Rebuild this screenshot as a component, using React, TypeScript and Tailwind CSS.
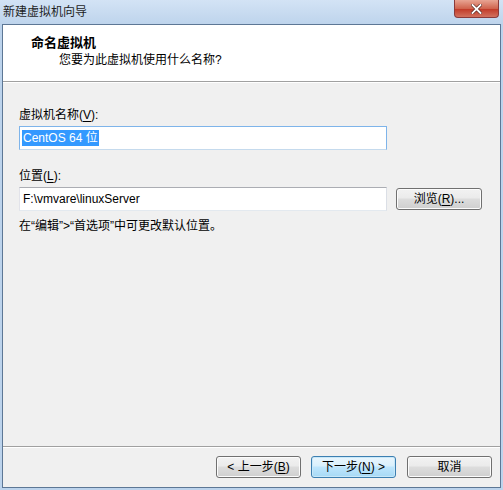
import type { ReactNode } from 'react';

const font = { fontFamily: '"Liberation Sans", "Noto Sans CJK SC", sans-serif' };

function Key({ children }: { children: ReactNode }) {
  return <span className="underline underline-offset-2">{children}</span>;
}

function Button({ children, primary, className }: { children: ReactNode; primary?: boolean; className?: string }) {
  return (
    <button
      className={
        'flex h-[22px] items-center justify-center rounded-[3px] border text-[12px] leading-none text-black ' +
        (primary
          ? 'border-[#3c7fb1] bg-[linear-gradient(#eaf6fd_0%,#d9f0fc_45%,#bee6fd_50%,#a7d9f5_100%)] shadow-[inset_0_0_0_1px_#c8e8f9] '
          : 'border-[#707070] bg-[linear-gradient(#f2f2f2_0%,#ebebeb_45%,#dddddd_50%,#cfcfcf_100%)] shadow-[inset_0_0_0_1px_#fcfcfc] ') +
        (className ?? '')
      }
    >
      {children}
    </button>
  );
}

export default function App() {
  return (
    <div style={font} className="flex h-[490px] w-[503px] flex-col bg-[#bcd3ec] text-[12px] text-black">
      {/* title bar */}
      <div className="relative flex h-[24px] items-center bg-[linear-gradient(#d3e3f5,#bed4ec)] pl-[3px]">
        <span className="text-[12px] leading-none text-[#1e1e1e]">新建虚拟机向导</span>
        <div className="absolute right-[4px] top-0 flex h-[18px] w-[45px] items-center justify-center rounded-b-[4px] border border-t-0 border-[#8a3a3a] bg-[linear-gradient(#e8a493,#d0644e_50%,#c23c2a_55%,#d2715e)]">
          <svg width="11" height="10" viewBox="0 0 11 10">
            <path d="M1.5 1 L9.5 9 M9.5 1 L1.5 9" stroke="#5a2a24" strokeWidth="3.2" strokeLinecap="square" />
            <path d="M1.5 1 L9.5 9 M9.5 1 L1.5 9" stroke="#ffffff" strokeWidth="1.8" strokeLinecap="square" />
          </svg>
        </div>
      </div>

      {/* client area */}
      <div className="mx-[2px] mb-[2px] flex flex-1 flex-col border border-[#5d7795] bg-[#f0f0f0]">
        <div className="flex h-[57px] flex-col border-b border-[#a0a0a0] bg-white pl-[28px] pt-[10px]">
          <div className="text-[13px] font-bold leading-[16px]">命名虚拟机</div>
          <div className="pl-[28px] pt-[1px] text-[12px] leading-[16px]">您要为此虚拟机使用什么名称?</div>
        </div>

        <div className="flex flex-1 flex-col border-t border-white px-[16px] pt-[24px]">
          <div className="leading-[16px]">
            虚拟机名称(<Key>V</Key>):
          </div>
          <div className="mt-[3px] flex h-[24px] w-[368px] items-center border border-[#7eb4ea] border-b-[#c5daed] bg-white px-[2px]">
            <span className="bg-[#3399ff] px-[1px] leading-[16px] text-white">CentOS 64 位</span>
          </div>

          <div className="mt-[18px] leading-[16px]">
            位置(<Key>L</Key>):
          </div>
          <div className="mt-[3px] flex items-center gap-[9px]">
            <div className="flex h-[24px] w-[368px] items-center border border-[#abadb3] border-b-[#e3e9ef] border-l-[#e2e3ea] border-r-[#dbdfe6] bg-white px-[3px] leading-[16px]">
              F:\vmvare\linuxServer
            </div>
            <Button className="w-[86px]">
              浏览(<Key>R</Key>)...
            </Button>
          </div>

          <div className="mt-[7px] leading-[16px]">在“编辑”&gt;“首选项”中可更改默认位置。</div>
        </div>

        {/* footer */}
        <div className="flex h-[41px] items-start justify-end gap-[10px] border-t border-[#a0a0a0] pr-[8px] pt-[9px] shadow-[inset_0_1px_0_#ffffff]">
          <Button className="w-[85px]">
            &lt; 上一步(<Key>B</Key>)
          </Button>
          <Button primary className="w-[85px]">
            下一步(<Key>N</Key>) &gt;
          </Button>
          <Button className="ml-[1px] w-[85px]">取消</Button>
        </div>
      </div>
    </div>
  );
}
